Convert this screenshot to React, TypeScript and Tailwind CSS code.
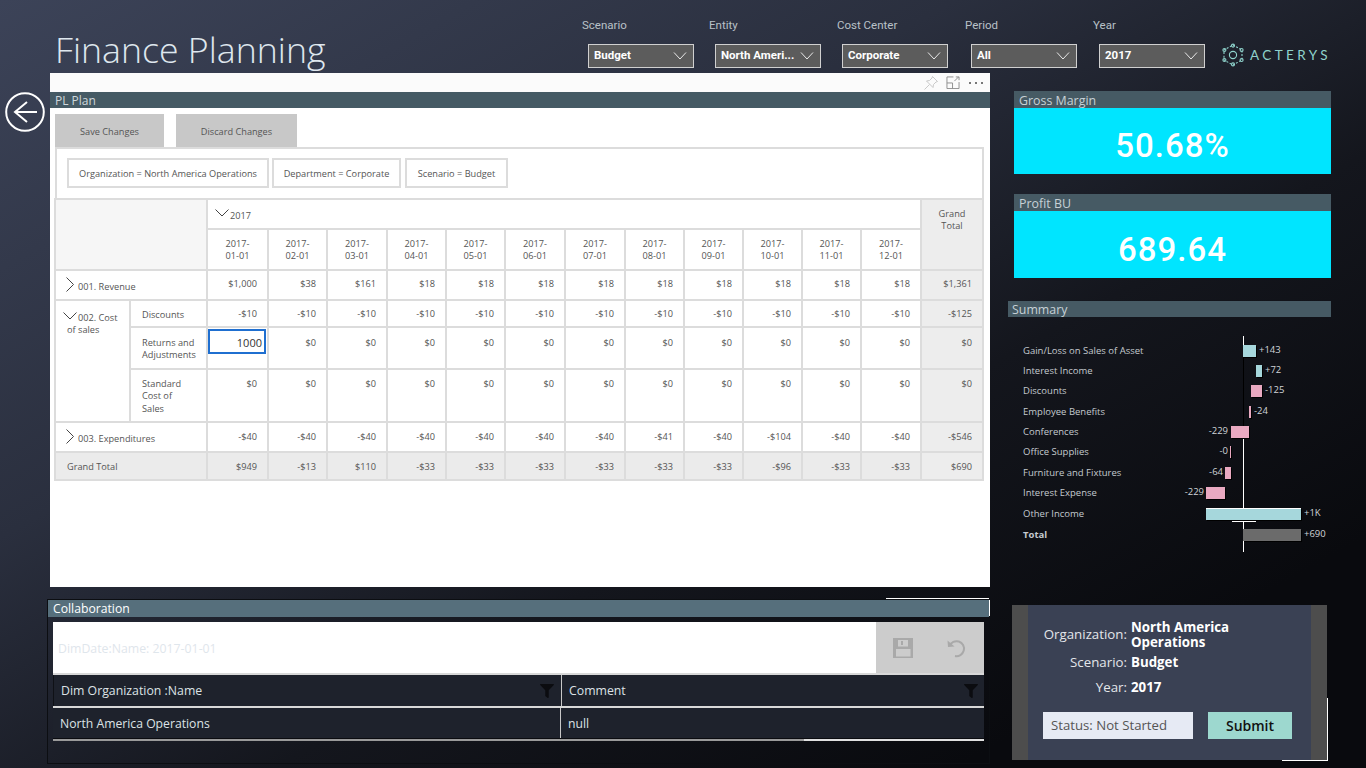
import { FaFilter } from "react-icons/fa";

const widths = [75, 77, 61, 59, 60, 59, 59, 60, 60, 59, 59, 59, 59, 60, 62];
const dates = ["01", "02", "03", "04", "05", "06", "07", "08", "09", "10", "11", "12"];

const slicers = [
    { label: "Scenario", value: "Budget", width: "w-[127px]", inset: "ml-[6px]" },
    { label: "Entity", value: "North Ameri...", width: "w-[128px]", inset: "ml-[6px]" },
    { label: "Cost Center", value: "Corporate", width: "w-[128px]", inset: "ml-[5px]" },
    { label: "Period", value: "All", width: "w-[128px]", inset: "ml-[6px]" },
    { label: "Year", value: "2017", width: "w-[128px]", inset: "ml-[6px]" },
];

const revenue = ["$1,000", "$38", "$161", "$18", "$18", "$18", "$18", "$18", "$18", "$18", "$18", "$18", "$1,361"];
const discounts = [...Array(12).fill("-$10"), "-$125"];
const zeros = Array(13).fill("$0");
const expenditures = ["-$40", "-$40", "-$40", "-$40", "-$40", "-$40", "-$40", "-$41", "-$40", "-$104", "-$40", "-$40", "-$546"];
const grandTotal = ["$949", "-$13", "$110", "-$33", "-$33", "-$33", "-$33", "-$33", "-$33", "-$96", "-$33", "-$33", "$690"];

const bars = [
    { name: "Gain/Loss on Sales of Asset", y: 350, x: 1243, w: 13, color: "#a6d7dc", value: "+143", vx: 1259 },
    { name: "Interest Income", y: 370, x: 1256, w: 6, color: "#a6d7dc", value: "+72", vx: 1265 },
    { name: "Discounts", y: 390, x: 1251, w: 11, color: "#e9a9c1", value: "-125", vx: 1265 },
    { name: "Employee Benefits", y: 411, x: 1249, w: 2, color: "#e9a9c1", value: "-24", vx: 1254 },
    { name: "Conferences", y: 431, x: 1231, w: 18, color: "#e9a9c1", value: "-229", vx: 1228, end: true },
    { name: "Office Supplies", y: 451, x: 1230, w: 1, color: "#e9a9c1", value: "-0", vx: 1228, end: true },
    { name: "Furniture and Fixtures", y: 472, x: 1225, w: 6, color: "#e9a9c1", value: "-64", vx: 1223, end: true },
    { name: "Interest Expense", y: 492, x: 1206, w: 19, color: "#e9a9c1", value: "-229", vx: 1204, end: true },
    { name: "Other Income", y: 513, x: 1206, w: 95, color: "#a6d7dc", value: "+1K", vx: 1304 },
    { name: "Total", y: 534, x: 1243, w: 58, color: "#6b6b6b", value: "+690", vx: 1304, bold: true },
];

const ChevronDown = ({ className }: { className?: string }) => (
    <svg viewBox="0 0 14 8" className={className} fill="none" stroke="#444" strokeWidth="1">
        <path d="M0.5 0.5 L7 7 L13.5 0.5" />
    </svg>
);

const ChevronRight = ({ className }: { className?: string }) => (
    <svg viewBox="0 0 8 15" className={className} fill="none" stroke="#444" strokeWidth="1">
        <path d="M0.5 0.5 L7.5 7.5 L0.5 14.5" />
    </svg>
);

const Slicer = ({ label, value, width, inset }: { label: string; value: string; width: string; inset: string }) => (
    <div className={`${width} flex flex-col`}>
        <div className="h-[19px] mt-[16px] text-[11.5px] leading-[19px] text-[#b9c1c8] font-['Roboto',sans-serif]">{label}</div>
        <div className={`${inset} mt-[9px] w-[106px] h-[24px] border border-[#d0d0d0] bg-[#5c5c5c] flex items-center justify-between pl-[5px] pr-[6px] text-[11.5px] font-bold text-white font-['Roboto',sans-serif]`}>
            <span className="whitespace-nowrap">{value}</span>
            <svg viewBox="0 0 14 8" className="w-[14px] h-[8px] shrink-0" fill="none" stroke="#e8e8e8" strokeWidth="1">
                <path d="M1 0.5 L7 7 L13 0.5" />
            </svg>
        </div>
    </div>
);

const Logo = () => (
    <div className="flex items-center gap-[5px] mt-[43px] h-[24px] text-[#8fd3cc]">
        <svg viewBox="0 0 24 24" className="w-[24px] h-[24px]" fill="none" stroke="#8fd3cc" strokeWidth="1.1">
            <path d="M12 2 L21 7 V17 L12 22 L3 17 V7 Z" strokeDasharray="2 1.6" />
            <circle cx="12" cy="12" r="3.6" />
            <circle cx="12" cy="2.6" r="1.5" />
            <circle cx="12" cy="21.4" r="1.5" />
            <circle cx="3.4" cy="7" r="1.5" />
            <circle cx="20.6" cy="7" r="1.5" />
            <circle cx="3.4" cy="17" r="1.5" />
            <circle cx="20.6" cy="17" r="1.5" />
        </svg>
        <span className="text-[13.5px] tracking-[3.4px] font-['Lato',sans-serif]">ACTERYS</span>
    </div>
);

const ValueCells = ({ values, cellClass }: { values: string[]; cellClass?: string }) => (
    <>
        {values.map((v, i) => (
            <td
                key={i}
                className={`border-2 border-[#dcdcdc] align-top text-right pt-[7px] pr-[10px] ${i === values.length - 1 ? "bg-[#ededed]" : ""} ${cellClass ?? ""}`}
            >
                {v}
            </td>
        ))}
    </>
);

const PlanTable = () => (
    <table className="table-fixed border-collapse w-[928px] ml-[4px] text-[9.2px] leading-[12.4px] text-[#555]">
        <colgroup>
            {widths.map((w, i) => (
                <col key={i} style={{ width: w }} />
            ))}
        </colgroup>
        <tbody>
            <tr className="h-[30px]">
                <td colSpan={2} rowSpan={2} className="border-2 border-[#dcdcdc] bg-[#f6f6f6]" />
                <td colSpan={12} className="border-2 border-[#dcdcdc] align-top pt-[10px] pl-[7px]">
                    <span className="flex items-center">
                        <ChevronDown className="w-[14px] h-[8px] -mt-[6px] mr-px" />
                        2017
                    </span>
                </td>
                <td rowSpan={2} className="border-2 border-[#dcdcdc] bg-[#ededed] align-top text-center pt-[8px]">
                    Grand
                    <br />
                    Total
                </td>
            </tr>
            <tr className="h-[41px]">
                {dates.map((d) => (
                    <td key={d} className="border-2 border-[#dcdcdc] text-center align-top pt-[8px]">
                        2017-
                        <br />
                        {d}-01
                    </td>
                ))}
            </tr>
            <tr className="h-[30px]">
                <td colSpan={2} className="border-2 border-[#dcdcdc] align-top pt-[6px] pl-[10px]">
                    <span className="flex items-start">
                        <ChevronRight className="w-[8px] h-[15px] mr-[4px]" />
                        <span className="mt-[4px]">001. Revenue</span>
                    </span>
                </td>
                <ValueCells values={revenue} />
            </tr>
            <tr className="h-[27px]">
                <td rowSpan={3} className="border-2 border-[#dcdcdc] align-top pt-[11px] pl-[11px] pr-[4px]">
                    <ChevronDown className="inline-block w-[14px] h-[8px] -mt-[5px] -ml-[4px] mr-px" />
                    002. Cost of sales
                </td>
                <td className="border-2 border-[#dcdcdc] align-top pt-[8px] pl-[11px]">Discounts</td>
                <ValueCells values={discounts} />
            </tr>
            <tr className="h-[42px]">
                <td className="border-2 border-[#dcdcdc] align-top pt-[9px] pl-[11px]">
                    Returns and
                    <br />
                    Adjustments
                </td>
                <td className="border-2 border-[#dcdcdc] align-top p-0">
                    <div className="h-[25px] mt-px mr-px border-2 border-[#1f6fd0] text-right pr-[2px] text-[11px] leading-[23px] text-[#333]">
                        1000
                    </div>
                </td>
                <ValueCells values={zeros.slice(1)} cellClass="!pt-[9px]" />
            </tr>
            <tr className="h-[53px]">
                <td className="border-2 border-[#dcdcdc] align-top pt-[8px] pl-[11px]">
                    Standard
                    <br />
                    Cost of
                    <br />
                    Sales
                </td>
                <ValueCells values={zeros} cellClass="!pt-[8px]" />
            </tr>
            <tr className="h-[30px]">
                <td colSpan={2} className="border-2 border-[#dcdcdc] align-top pt-[6px] pl-[10px]">
                    <span className="flex items-start">
                        <ChevronRight className="w-[8px] h-[15px] mr-[4px]" />
                        <span className="mt-[4px]">003. Expenditures</span>
                    </span>
                </td>
                <ValueCells values={expenditures} cellClass="!pt-[8px]" />
            </tr>
            <tr className="h-[28px] bg-[#ebebeb]">
                <td colSpan={2} className="border-2 border-[#dcdcdc] align-top pt-[8px] pl-[11px]">
                    Grand Total
                </td>
                <ValueCells values={grandTotal} cellClass="!pt-[8px]" />
            </tr>
        </tbody>
    </table>
);

const PlanPanel = () => (
    <div className="ml-[3px] h-[514px] bg-white flex flex-col">
        <div className="h-[19px] bg-[#fbfbfb] flex items-center justify-end pr-[7px]">
            <svg viewBox="0 0 16 16" className="w-[16px] h-[16px] mr-[7px]" fill="none" stroke="#c9c9c9" strokeWidth="1">
                <path d="M9.5 1.5 L14.5 6.5 L13 7 L10.5 9.5 L10 12.5 L3.5 6 L6.5 5.5 L9 3 Z M6.5 9.5 L1.5 14.5" />
            </svg>
            <svg viewBox="0 0 14 14" className="w-[14px] h-[13px] mr-[9px]" fill="none" stroke="#8a8a8a" strokeWidth="1">
                <path d="M7.5 1 H0.5 V13.5 H13.5 V6.5 M0.5 7.5 H6.5 V13.5 M8.5 5.5 L13 1 M10 1 H13.5 V4.5" />
            </svg>
            <div className="flex gap-[4px]">
                <span className="w-[2px] h-[2px] bg-[#777]" />
                <span className="w-[2px] h-[2px] bg-[#777]" />
                <span className="w-[2px] h-[2px] bg-[#777]" />
            </div>
        </div>
        <div className="h-[16px] bg-[#455a64] pl-[5px] text-[12px] leading-[18px] text-[#cfd8dc]">PL Plan</div>
        <div className="flex gap-[12px] ml-[5px] mt-[6px]">
            <div className="w-[109px] h-[33px] pt-[2px] bg-[#c8c8c8] flex items-center justify-center text-[9.2px] text-[#555]">Save Changes</div>
            <div className="w-[121px] h-[33px] pt-[2px] bg-[#c8c8c8] flex items-center justify-center text-[9.2px] text-[#555]">Discard Changes</div>
        </div>
        <div className="ml-[5px] w-[929px] h-[51px] border-x-2 border-t-2 border-[#dcdcdc] flex pl-[10px] pt-[9px] text-[9.2px] text-[#555]">
            <div className="h-[30px] w-[202px] pt-[2px] border-2 border-[#dcdcdc] flex items-center justify-center whitespace-nowrap">Organization = North America Operations</div>
            <div className="ml-[3px] h-[30px] w-[129px] pt-[2px] border-2 border-[#dcdcdc] flex items-center justify-center whitespace-nowrap">Department = Corporate</div>
            <div className="ml-[4px] h-[30px] w-[103px] pt-[2px] border-2 border-[#dcdcdc] flex items-center justify-center whitespace-nowrap">Scenario = Budget</div>
        </div>
        <PlanTable />
    </div>
);

const Collaboration = () => (
    <div className="relative mt-[12px] h-[165px] border border-[#0c0e12] flex flex-col">
        <div className="h-[17px] bg-[#566f7c] pl-[5px] text-[12.2px] leading-[18px] text-white">Collaboration</div>
        <div className="mt-[5px] mx-[5px] h-[53px] w-[931px] flex border-b-2 border-[#d8d8d8]">
            <div className="w-[823px] bg-white flex items-center pt-[3px] pl-[5px] text-[12.3px] text-[#dfe6ec]">DimDate:Name: 2017-01-01</div>
            <div className="flex-1 bg-[#cccccc] flex items-center pl-[17px] gap-[33px]">
                <svg viewBox="0 0 20 20" className="w-[20px] h-[20px]">
                    <path fillRule="evenodd" fill="#a9a9a9" d="M0 0 H20 V20 H0 Z M5 2 V8.5 H15 V2 Z M8 3 H10 V7 H8 Z M3 11 V18.5 H17.5 V11 Z" />
                </svg>
                <svg viewBox="0 0 20 20" className="w-[20px] h-[20px]" fill="none" stroke="#a9a9a9" strokeWidth="2">
                    <path d="M3.5 8 A7.5 7.5 0 1 1 9 18" />
                    <path d="M1.5 2.5 L2 9 L8.5 8.5 Z" fill="#a9a9a9" stroke="none" />
                </svg>
            </div>
        </div>
        <div className="mx-[5px] w-[931px] h-[31px] bg-[#1e222c] flex text-[12.3px] text-[#dde2e6] border-l border-[#0f1116]">
            <div className="w-[508px] flex items-center justify-between pl-[7px] pr-[7px] border-r border-[#c8c8c8]">
                <span className="mt-[2px]">Dim Organization :Name</span>
                <FaFilter className="text-[#0b0c10] w-[14px] h-[14px]" />
            </div>
            <div className="flex-1 flex items-center justify-between pl-[7px] pr-[6px]">
                <span className="mt-[2px]">Comment</span>
                <FaFilter className="text-[#0b0c10] w-[14px] h-[14px]" />
            </div>
        </div>
        <div className="mx-[5px] w-[931px] h-[2px] bg-[#d8d8d8]" />
        <div className="mx-[5px] w-[931px] h-[31px] bg-[#1e222c] flex text-[12.2px] text-[#dde2e6] border-b border-[#0b0c10]">
            <div className="w-[508px] flex items-center pt-[3px] pl-[7px] border-r border-[#c8c8c8]">North America Operations</div>
            <div className="flex-1 flex items-center pt-[3px] pl-[7px]">null</div>
        </div>
        <div className="relative mx-[5px] w-[931px] h-[2px] bg-[#9a9a9a]">
            <div className="absolute top-0 right-0 w-[180px] h-full bg-[#e0e0e0]" />
        </div>
        <div className="absolute -top-[2px] right-0 w-[103px] h-px bg-white" />
        <div className="absolute top-0 -right-px w-px h-[16px] bg-white" />
    </div>
);

const KpiCard = ({ title, value, className, boxClass }: { title: string; value: string; className?: string; boxClass: string }) => (
    <div className={`ml-[6px] w-[317px] ${className ?? ""}`}>
        <div className="h-[17px] bg-[#465a64] pl-[5px] text-[12.4px] leading-[19px] text-[#c7d1d6]">{title}</div>
        <div className={`${boxClass} bg-[#00e5ff] flex items-center justify-center pt-[10px] text-[33px] font-medium tracking-[1px] text-white font-['Roboto',sans-serif]`}>
            {value}
        </div>
    </div>
);

const SummaryChart = () => (
    <svg viewBox="1008 320 323 240" className="w-[323px] h-[240px] mt-[4px]">
        <line x1="1243.5" y1="335" x2="1243.5" y2="345" stroke="#ffffff" />
        <line x1="1243.5" y1="345" x2="1243.5" y2="438" stroke="#000000" />
        <line x1="1243.5" y1="438" x2="1243.5" y2="509" stroke="#ffffff" />
        <line x1="1243.5" y1="521" x2="1243.5" y2="551" stroke="#ffffff" />
        {bars.map((b) => (
            <g key={b.name} fontFamily="'Open Sans', sans-serif" fontSize="9.5">
                <text x="1023" y={b.y + 3} fill="#c4cacf" fontWeight={b.bold ? 700 : 400}>{b.name}</text>
                <rect x={b.x + 1} y={b.y - 5} width={b.w} height="12" fill="#000000" />
                <rect x={b.x} y={b.y - 6} width={b.w} height="12" fill={b.color} />
                <text x={b.vx} y={b.y + 2} fill="#d0d4d8" textAnchor={b.end ? "end" : "start"}>{b.value}</text>
            </g>
        ))}
        <line x1="1206" y1="507.5" x2="1301" y2="507.5" stroke="#ffffff" />
        <line x1="1232" y1="520.5" x2="1256" y2="520.5" stroke="#ffffff" />
    </svg>
);

const StatusCard = () => (
    <div className="relative ml-[4px] mt-[44px] w-[315px] h-[155px] bg-[#3a4154] border-x-[16px] border-[#4d4d4d] text-white">
        <div className="absolute top-[14px] left-0 w-[99px] h-[32px] flex items-center justify-end text-[13.3px] text-[#e3e6ea]">Organization:</div>
        <div className="absolute top-[15px] left-[103px] w-[130px] text-[13.3px] leading-[15px] font-bold">North America Operations</div>
        <div className="absolute top-[47px] left-0 w-[99px] text-right text-[13.3px] leading-[20px] text-[#e3e6ea]">Scenario:</div>
        <div className="absolute top-[47px] left-[103px] text-[13.3px] leading-[20px] font-bold">Budget</div>
        <div className="absolute top-[72px] left-0 w-[99px] text-right text-[13.3px] leading-[20px] text-[#e3e6ea]">Year:</div>
        <div className="absolute top-[72px] left-[103px] text-[13.3px] leading-[20px] font-bold">2017</div>
        <div className="absolute top-[107px] left-[15px] w-[150px] h-[27px] bg-[#e6eaf4] flex items-center pl-[8px] text-[13.2px] text-[#555]">Status: Not Started</div>
        <div className="absolute top-[107px] left-[180px] w-[84px] h-[27px] bg-[#9dd8cf] flex items-center justify-center text-[14px] font-semibold text-[#111]">Submit</div>
        <div className="absolute top-[93px] -right-[17px] w-px h-[62px] bg-white" />
        <div className="absolute top-[155px] -right-[17px] w-[46px] h-px bg-white" />
    </div>
);

export default function App() {
    return (
        <div className="w-[1366px] h-[768px] overflow-hidden flex flex-col bg-[linear-gradient(to_bottom_right,#3c4358_0%,#2a2f3e_35%,#14161d_60%,#090a0e_85%)] font-['Open_Sans',sans-serif]">
            <div className="h-[73px] flex">
                <div className="w-[582px] pl-[55px] pt-[25px] text-[35.7px] leading-[48px] font-light text-[#dfe7ee]">Finance Planning</div>
                {slicers.map((s) => (
                    <Slicer key={s.label} label={s.label} value={s.value} width={s.width} inset={s.inset} />
                ))}
                <Logo />
            </div>
            <div className="flex">
                <div className="w-[47px] shrink-0 pt-[19px] pl-[5px]">
                    <svg viewBox="0 0 40 40" className="w-[40px] h-[40px]" fill="none" stroke="#ffffff" strokeWidth="2">
                        <circle cx="20" cy="20" r="18.8" />
                        <path d="M32 20 H10 M22 10 L10 20 L22 30" />
                    </svg>
                </div>
                <div className="w-[943px] shrink-0">
                    <PlanPanel />
                    <Collaboration />
                </div>
                <div className="ml-[18px] w-[323px] shrink-0 pt-[18px]">
                    <KpiCard title="Gross Margin" value="50.68%" boxClass="h-[66px]" />
                    <KpiCard title="Profit BU" value="689.64" className="mt-[20px]" boxClass="h-[67px]" />
                    <div className="mt-[23px] h-[16px] bg-[#465a64] pl-[4px] text-[12.4px] leading-[18px] text-[#c7d1d6]">Summary</div>
                    <SummaryChart />
                    <StatusCard />
                </div>
            </div>
        </div>
    );
}
